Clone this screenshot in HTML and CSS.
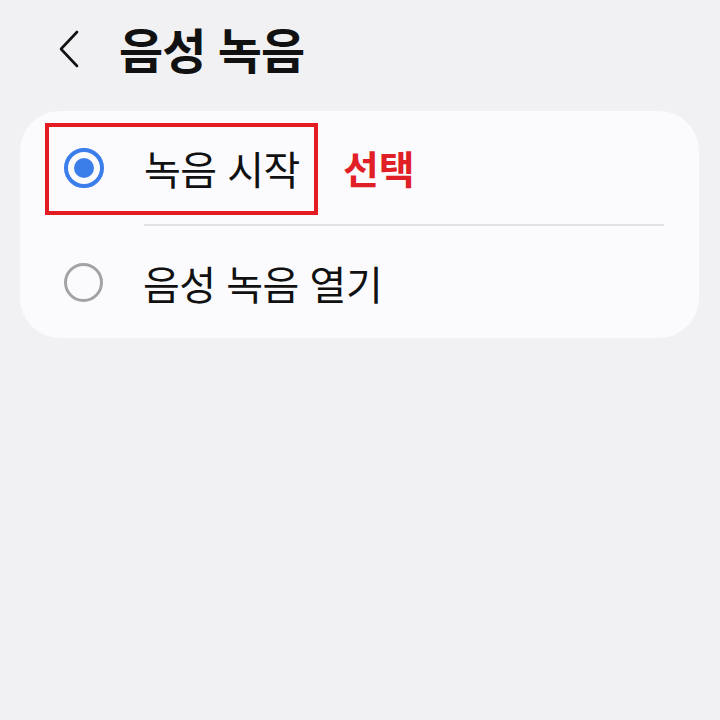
FILE: index.html
```html
<!DOCTYPE html>
<html lang="ko">
<head>
<meta charset="utf-8">
<link rel="stylesheet" href="styles.css">
</head>
<body>
<header class="header">
  <svg class="back" width="24" height="40" viewBox="0 0 24 40"><path d="M19 3 L3 20 L19 37" fill="none" stroke="#111" stroke-width="2.6" stroke-linecap="round" stroke-linejoin="round"/></svg>
  <h1 class="title">음성 녹음</h1>
</header>
<section class="card">
  <div class="row">
    <span class="radio on"><span class="dot"></span></span>
    <span class="label">녹음 시작</span>
    <span class="note">선택</span>
  </div>
  <div class="divider"></div>
  <div class="row">
    <span class="radio off"></span>
    <span class="label">음성 녹음 열기</span>
  </div>
  <div class="highlight"></div>
</section>
</body>
</html>
```
FILE: styles.css
```css
* { box-sizing: border-box; }
html, body { margin: 0; padding: 0; }
body {
  width: 720px;
  height: 720px;
  background: #f1f1f3;
  font-family: "Noto Sans CJK KR", "Noto Sans", sans-serif;
  color: #111;
}
.header {
  height: 111px;
  display: flex;
  align-items: center;
  padding: 0 0 16px 58px;
}
.back { display: block; margin-top: 3px; }
.title {
  margin: 0 0 0 37px;
  font-size: 48px;
  font-weight: 700;
  letter-spacing: -1px;
  line-height: 1;
}
.card {
  position: relative;
  margin: 0 21px 0 20px;
  height: 227px;
  background: #fbfbfd;
  border-radius: 40px;
}
.row {
  height: 113px;
  display: flex;
  align-items: center;
  padding-left: 44px;
}
.radio {
  width: 40px;
  height: 40px;
  border-radius: 50%;
  display: flex;
  align-items: center;
  justify-content: center;
  flex: none;
}
.radio.on { border: 4px solid #3b7de9; }
.radio.on .dot { width: 20px; height: 20px; border-radius: 50%; background: #3b7de9; }
.radio.off { width: 39px; height: 39px; border: 3px solid #a3a3a5; }
.label {
  margin-left: 40px;
  font-size: 40px;
  letter-spacing: -0.5px;
  line-height: 1;
}
.note {
  margin-left: 43px;
  font-size: 39px;
  font-weight: 700;
  color: #e01f27;
  line-height: 1;
}
.divider {
  height: 2px;
  margin: 0 35px 0 124px;
  background: #e2e2e4;
}
.highlight {
  position: absolute;
  left: 25px;
  top: 12px;
  width: 273px;
  height: 92px;
  border: 4px solid #e31c24;
}
```
